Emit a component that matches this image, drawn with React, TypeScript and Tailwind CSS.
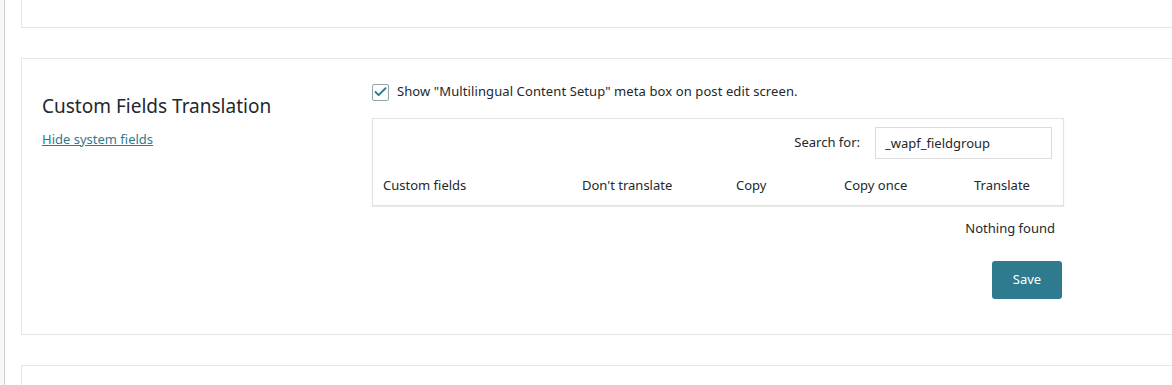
import { Check } from 'lucide-react';

const columns = ["Custom fields", "Don't translate", 'Copy', 'Copy once', 'Translate'];

export default function App() {
  return (
    <div
      className="flex h-[385px] w-full overflow-hidden bg-white text-[13px] text-[#23282d]"
      style={{ fontFamily: '"Noto Sans", "Open Sans", sans-serif' }}
    >
      {/* admin sidebar edge */}
      <div className="w-[5px] shrink-0 bg-[#f7f7f7] border-r border-[#d0d0d0]" />

      <div className="flex flex-1 flex-col pl-[16px]">
        {/* previous card */}
        <div className="h-[28px] shrink-0 -mr-4 border-l border-b border-[#e6e6e6]" />

        {/* Custom Fields Translation card */}
        <div className="mt-[30px] -mr-4 flex h-[277px] shrink-0 border border-[#e6e6e6] pl-5 pt-[25px]">
          <div className="w-[330px] shrink-0 pt-[9px]">
            <h2 className="text-[19px] leading-[26px] text-[#23282d]">Custom Fields Translation</h2>
            <a href="#" className="mt-[11px] block leading-[18px] text-[#2e7b8f] underline">
              Hide system fields
            </a>
          </div>

          <div className="w-[692px] shrink-0">
            <label className="flex h-4 items-center gap-2">
              <span className="flex h-[17px] w-[17px] items-center justify-center rounded-[2px] border border-[#8fa6ad] bg-white">
                <Check size={16} strokeWidth={3} className="text-[#2e7b8f]" />
              </span>
              <span className="tracking-[0.1px]">Show "Multilingual Content Setup" meta box on post edit screen.</span>
            </label>

            <div className="mt-[18px] border border-[#e2e2e2] shadow-[0_1px_1px_rgba(0,0,0,0.08)]">
              <div className="flex items-center justify-end gap-[15px] pt-2 pr-[11px]">
                <span>Search for:</span>
                <input
                  readOnly
                  value="_wapf_fieldgroup"
                  className="h-[32px] w-[177px] border border-[#dcdcdc] px-[9px] text-[13px] text-[#23282d] outline-none"
                />
              </div>
              <div className="grid h-[46px] grid-cols-[199px_154px_108px_130px_1fr] items-center pl-[10px] pt-2">
                {columns.map((c) => (
                  <span key={c}>{c}</span>
                ))}
              </div>
            </div>

            <div className="mt-[13px] pr-[9px] text-right">Nothing found</div>

            <div className="mt-[22px] flex justify-end pr-[2px]">
              <button className="h-[38px] w-[70px] rounded-[3px] bg-[#2e7b8f] text-white">Save</button>
            </div>
          </div>
        </div>

        {/* next card */}
        <div className="mt-[30px] -mr-4 h-[40px] shrink-0 border-l border-t border-[#e6e6e6]" />
      </div>
    </div>
  );
}
